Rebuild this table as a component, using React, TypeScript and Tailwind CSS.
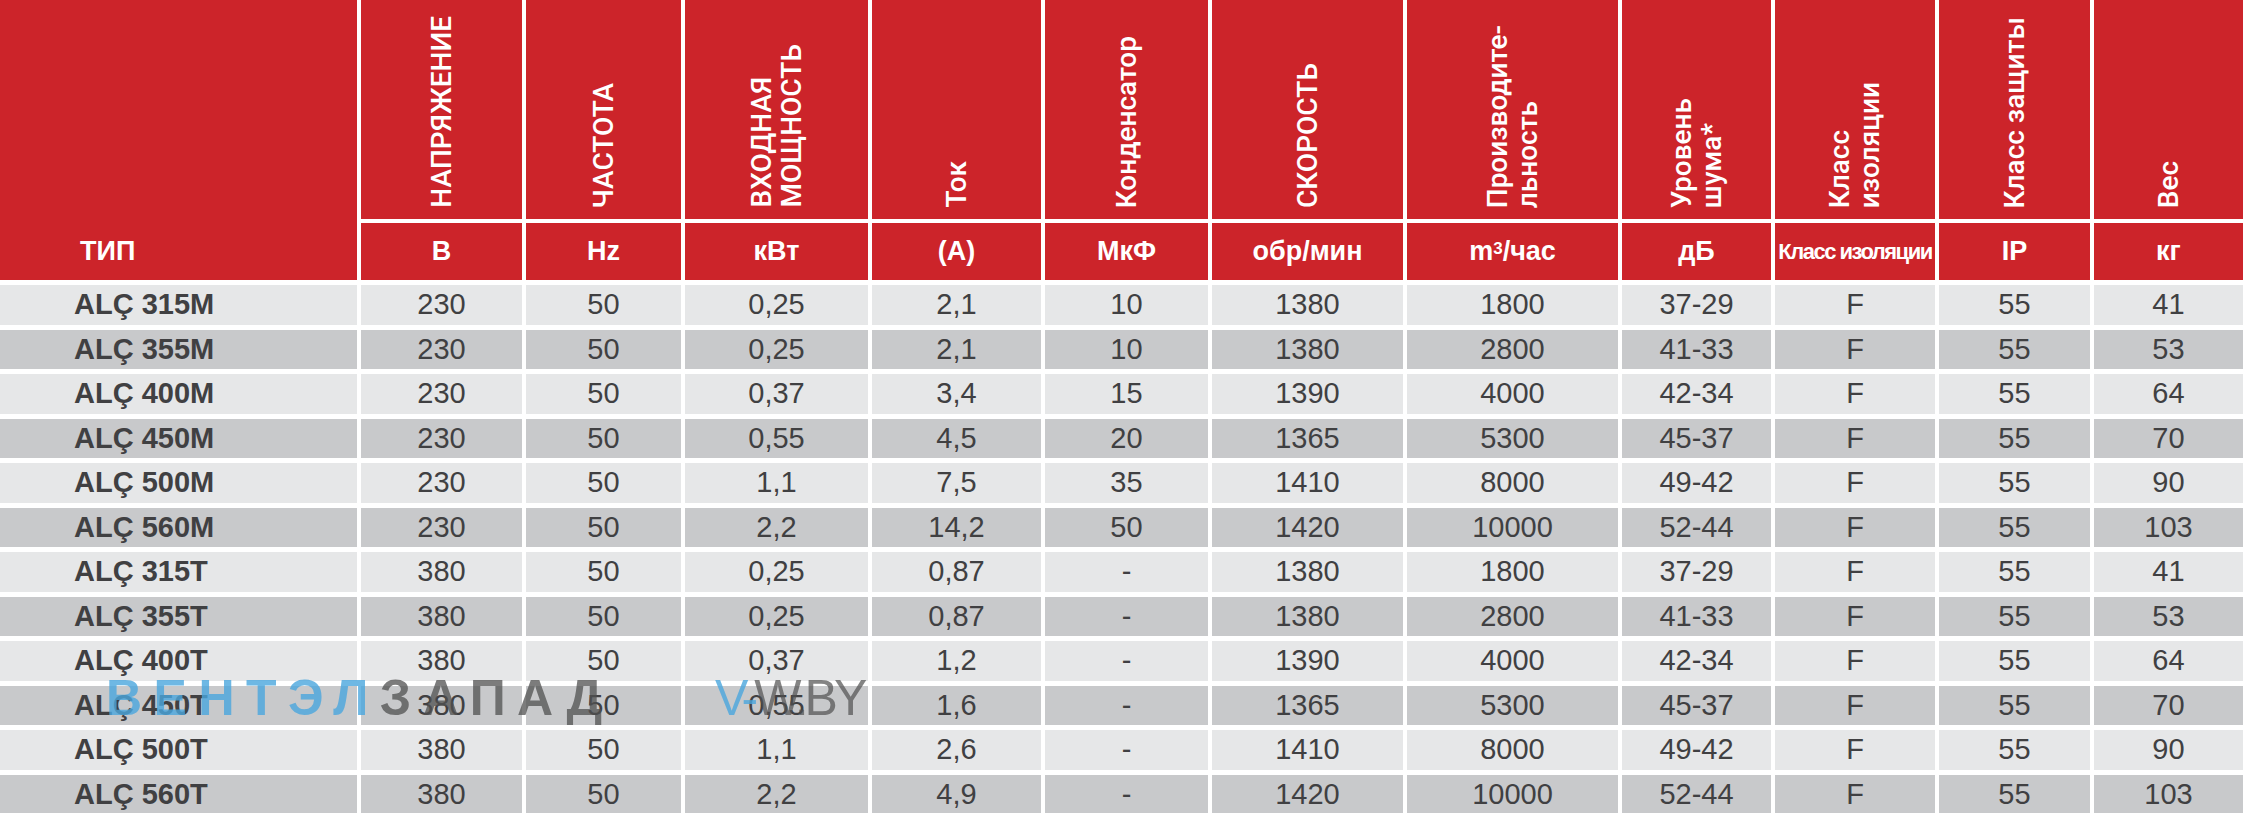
import React from 'react';

const cols =
  'grid grid-cols-[357px_161px_155px_183px_169px_163px_191px_211px_149px_160px_151px_149px] gap-x-[4px]';

const titles: string[][] = [
  ['НАПРЯЖЕНИЕ'],
  ['ЧАСТОТА'],
  ['ВХОДНАЯ', 'МОЩНОСТЬ'],
  ['Ток'],
  ['Конденсатор'],
  ['СКОРОСТЬ'],
  ['Производите-', 'льность'],
  ['Уровень', 'шума*'],
  ['Класс', 'изоляции'],
  ['Класс защиты'],
  ['Вес'],
];

const units: React.ReactNode[] = [
  'В',
  'Hz',
  'кВт',
  '(A)',
  'МкФ',
  'обр/мин',
  <>
    m<sup className="text-[17px] relative top-[-3px]">3</sup>/час
  </>,
  'дБ',
  <span className="text-[22px] tracking-[-1.5px]">Класс изоляции</span>,
  'IP',
  'кг',
];

const rows: string[][] = [
  ['ALÇ 315M', '230', '50', '0,25', '2,1', '10', '1380', '1800', '37-29', 'F', '55', '41'],
  ['ALÇ 355M', '230', '50', '0,25', '2,1', '10', '1380', '2800', '41-33', 'F', '55', '53'],
  ['ALÇ 400M', '230', '50', '0,37', '3,4', '15', '1390', '4000', '42-34', 'F', '55', '64'],
  ['ALÇ 450M', '230', '50', '0,55', '4,5', '20', '1365', '5300', '45-37', 'F', '55', '70'],
  ['ALÇ 500M', '230', '50', '1,1', '7,5', '35', '1410', '8000', '49-42', 'F', '55', '90'],
  ['ALÇ 560M', '230', '50', '2,2', '14,2', '50', '1420', '10000', '52-44', 'F', '55', '103'],
  ['ALÇ 315T', '380', '50', '0,25', '0,87', '-', '1380', '1800', '37-29', 'F', '55', '41'],
  ['ALÇ 355T', '380', '50', '0,25', '0,87', '-', '1380', '2800', '41-33', 'F', '55', '53'],
  ['ALÇ 400T', '380', '50', '0,37', '1,2', '-', '1390', '4000', '42-34', 'F', '55', '64'],
  ['ALÇ 450T', '380', '50', '0,55', '1,6', '-', '1365', '5300', '45-37', 'F', '55', '70'],
  ['ALÇ 500T', '380', '50', '1,1', '2,6', '-', '1410', '8000', '49-42', 'F', '55', '90'],
  ['ALÇ 560T', '380', '50', '2,2', '4,9', '-', '1420', '10000', '52-44', 'F', '55', '103'],
];

export default function App() {
  return (
    <div className="relative w-[2243px] h-[813px] overflow-hidden bg-white font-['Liberation_Sans',Arial,sans-serif]">
      {/* шапка */}
      <div className={`${cols} grid-rows-[219px_57px] gap-y-[4px]`}>
        <div className="row-span-2 bg-[#cc242a] flex flex-col justify-end">
          <div className="h-[57px] flex items-center pl-[80px] text-white font-bold text-[27px] leading-none">
            ТИП
          </div>
        </div>
        {titles.map((t, i) => (
          <div key={i} className="bg-[#cc242a] flex items-end justify-center pb-[11px]">
            <div className="[writing-mode:vertical-rl] rotate-180 text-left text-white font-['Roboto',sans-serif] font-medium text-[28px] leading-[30px]">
              {t.map((line, j) => (
                <div key={j}>{line}</div>
              ))}
            </div>
          </div>
        ))}
        {units.map((u, i) => (
          <div
            key={i}
            className="bg-[#cc242a] flex items-center justify-center text-white font-bold text-[27px] leading-none whitespace-nowrap"
          >
            {u}
          </div>
        ))}
      </div>

      {/* данные */}
      <div className={`${cols} mt-[5px] auto-rows-[39.5px] gap-y-[5px] text-[#404042] text-[29px] leading-none`}>
        {rows.map((r, ri) =>
          r.map((c, ci) => (
            <div
              key={`${ri}-${ci}`}
              className={`flex items-center ${ri % 2 === 0 ? 'bg-[#e6e7e8]' : 'bg-[#c8c9cb]'} ${
                ci === 0 ? 'pl-[74px] font-bold' : 'justify-center'
              }`}
            >
              {c}
            </div>
          ))
        )}
      </div>

      {/* водяной знак */}
      <div className="absolute left-[106px] top-[673px] text-[50px] leading-none font-bold tracking-[11.5px] whitespace-nowrap">
        <span className="text-[#4aa6dd]/80">ВЕНТЭЛ</span>
        <span className="text-[#505050]/75">ЗАПАД</span>
      </div>
      <div className="absolute left-[715px] top-[673px] text-[50px] leading-none tracking-[-4px] whitespace-nowrap">
        <span className="text-[#4aa6dd]/80">V-</span>
        <span className="text-[#505050]/70">W.BY</span>
      </div>
    </div>
  );
}
